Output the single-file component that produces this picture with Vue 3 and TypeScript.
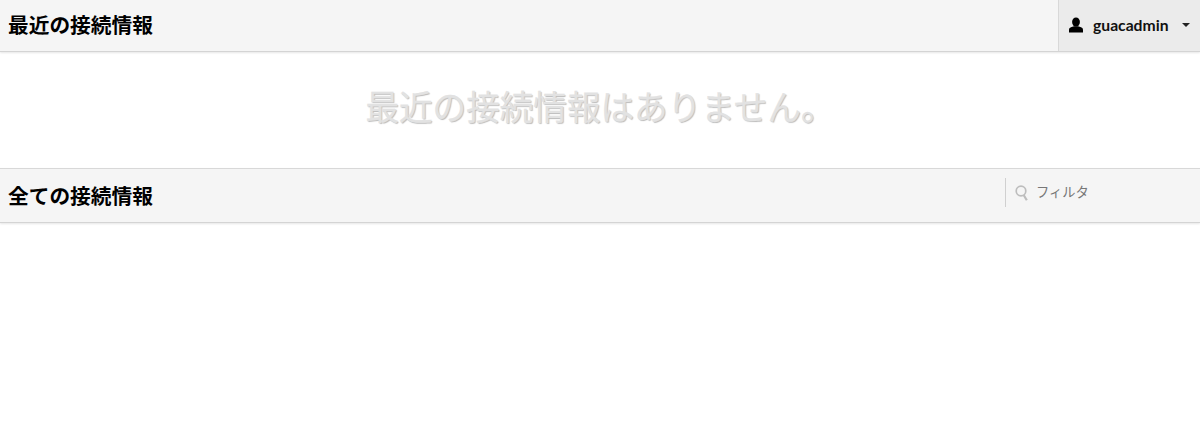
<script setup lang="ts">
const recentTitle = '最近の接続情報'
const allTitle = '全ての接続情報'
const noRecent = '最近の接続情報はありません。'
const username = 'guacadmin'
</script>

<template>
  <div class="page">
    <div class="header">
      <h2 class="title">{{ recentTitle }}</h2>
      <div class="user-menu">
        <svg class="user-icon" width="16" height="16" viewBox="0 0 16 16" aria-hidden="true">
          <ellipse cx="8" cy="5" rx="3.9" ry="4.6" fill="#000" />
          <path d="M1 15.5V13c0-1.6 1-2.4 2.6-2.9L6 9.3h4l2.4.8c1.6.5 2.6 1.3 2.6 2.9v2.5z" fill="#000" />
        </svg>
        <span class="username">{{ username }}</span>
        <span class="caret"></span>
      </div>
    </div>

    <div class="recent">
      <p class="placeholder">{{ noRecent }}</p>
    </div>

    <div class="header header--second">
      <h2 class="title">{{ allTitle }}</h2>
      <div class="filter">
        <svg class="search-icon" width="14" height="17" viewBox="0 0 14 17" aria-hidden="true">
          <circle cx="6" cy="6" r="4.8" fill="none" stroke="#bdbdbd" stroke-width="1.7" />
          <path d="M8.8 10.2l3 5" fill="none" stroke="#bdbdbd" stroke-width="2.2" />
        </svg>
        <span class="filter-text">フィルタ</span>
      </div>
    </div>
  </div>
</template>

<style>
html,
body {
  margin: 0;
  background: #fff;
}
</style>

<style scoped>
.page {
  width: 1200px;
  height: 444px;
  overflow: hidden;
  font-family: Lato, "Noto Sans CJK JP", sans-serif;
  color: #000;
}

.header {
  display: flex;
  align-items: stretch;
  justify-content: space-between;
  height: 51px;
  background: #f5f5f5;
  border-bottom: 1px solid #d4d4d4;
  box-shadow: 0 1px 2px rgba(0, 0, 0, 0.1);
}

.header--second {
  height: 53px;
  border-top: 1px solid #d8d8d8;
}

.title {
  margin: 0;
  padding-left: 8px;
  font-size: 20.7px;
  font-weight: 700;
  line-height: 50px;
}

.header--second .title {
  line-height: 54px;
}

.user-menu {
  display: flex;
  align-items: center;
  width: 142px;
  box-sizing: border-box;
  padding-left: 9px;
  padding-bottom: 1px;
  background: #ebebeb;
  border-left: 1px solid #d8d8d8;
}

.user-icon {
  flex-shrink: 0;
}

.username {
  margin-left: 9px;
  font-size: 15.7px;
  font-weight: 700;
  color: #111;
}

.caret {
  margin-left: 13px;
  border-left: 4.5px solid transparent;
  border-right: 4.5px solid transparent;
  border-top: 4.5px solid #222;
}

.recent {
  height: 116px;
  display: flex;
  justify-content: center;
}

.placeholder {
  margin: 0;
  padding-top: 31px;
  font-size: 33.6px;
  line-height: 48px;
  font-weight: 400;
  color: #e2e2e2;
  -webkit-text-stroke: 0.3px #e2e2e2;
  text-shadow: 1px 1px 1px #bbb;
}

.filter {
  display: flex;
  align-items: center;
  align-self: flex-start;
  width: 195px;
  height: 29px;
  margin-top: 9px;
  box-sizing: border-box;
  padding-left: 9px;
  padding-bottom: 2px;
  border-left: 1px solid #d0d0d0;
}

.search-icon {
  margin-top: 3px;
}

.filter-text {
  margin-left: 7px;
  font-size: 13.3px;
  color: #777;
}
</style>
